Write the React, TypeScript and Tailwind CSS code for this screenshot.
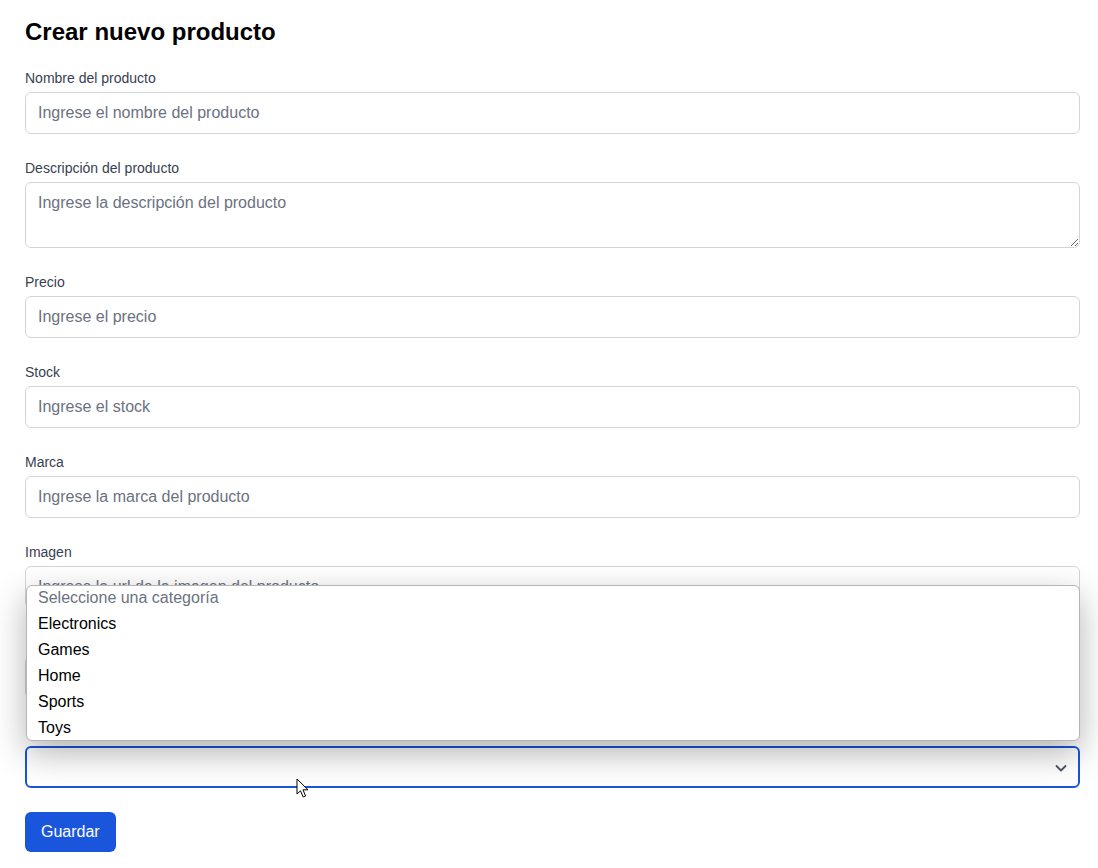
import React from "react";

const font = { fontFamily: '"Liberation Sans", Arial, sans-serif' };

function Field({ label, placeholder }: { label: string; placeholder: string }) {
  return (
    <div className="mb-6">
      <label className="block text-sm leading-5 text-[#374151] mb-1">{label || "\u00a0"}</label>
      <input
        type="text"
        placeholder={placeholder}
        className="block w-full h-[42px] px-3 py-2 text-base leading-6 border border-[#d1d5db] rounded-md bg-white text-black placeholder:text-[#6b7280] outline-none"
      />
    </div>
  );
}

export default function App() {
  const options = ["Electronics", "Games", "Home", "Sports", "Toys"];
  return (
    <div className="min-h-[868px] bg-white pl-[25px] pr-[18px] pt-4 relative" style={font}>
      <h1 className="text-2xl leading-8 font-bold text-black mb-5">Crear nuevo producto</h1>
      <form onSubmit={(e) => e.preventDefault()}>
        <Field label="Nombre del producto" placeholder="Ingrese el nombre del producto" />
        <div className="mb-6">
          <label className="block text-sm leading-5 text-[#374151] mb-1">Descripción del producto</label>
          <textarea
            rows={2}
            placeholder="Ingrese la descripción del producto"
            className="block w-full h-[66px] px-3 py-2 text-base leading-6 border border-[#d1d5db] rounded-md bg-white placeholder:text-[#6b7280] outline-none"
          />
        </div>
        <Field label="Precio" placeholder="Ingrese el precio" />
        <Field label="Stock" placeholder="Ingrese el stock" />
        <Field label="Marca" placeholder="Ingrese la marca del producto" />
        <Field label="Imagen" placeholder="Ingrese la url de la imagen del producto" />
        {/* field hidden behind the open dropdown */}
        <Field label="" placeholder="" />
        <div className="mb-6">
          <label className="block text-sm leading-5 text-[#374151] mb-1">{"\u00a0"}</label>
          <div className="relative">
            <div className="w-full h-[42px] rounded-md border-2 border-[#1a56db] bg-white" />
            <svg
              className="absolute right-[12px] top-[15px]"
              width="14"
              height="14"
              viewBox="0 0 14 14"
              fill="none"
            >
              <path d="M2.5 5 L7 9.5 L11.5 5" stroke="#4b5563" strokeWidth="1.8" strokeLinecap="round" strokeLinejoin="round" />
            </svg>
            {/* native dropdown popup */}
            <div className="absolute left-px right-0 bottom-full mb-[5px] h-[156px] bg-white border border-[#b5b5b5] rounded-md shadow-[0_12px_34px_rgba(0,0,0,0.3)] overflow-hidden">
              <div className="h-[26px] px-[11px] text-base leading-[24px] text-[#6b7280]">Seleccione una categoría</div>
              {options.map((o) => (
                <div key={o} className="h-[26px] px-[11px] text-base leading-[24px] text-black">
                  {o}
                </div>
              ))}
            </div>
            {/* mouse cursor */}
            <svg className="absolute left-[271px] top-[32px]" width="14" height="22" viewBox="0 0 14 22">
              <path d="M1 1 L1 16 L4.5 12.8 L7.2 19 L9.6 18 L7 11.8 L12 11.8 Z" fill="white" stroke="black" strokeWidth="1" strokeLinejoin="round" />
            </svg>
          </div>
        </div>
        <button type="submit" className="h-10 px-4 rounded-md bg-[#1a56db] text-white text-base leading-6">
          Guardar
        </button>
      </form>
    </div>
  );
}
